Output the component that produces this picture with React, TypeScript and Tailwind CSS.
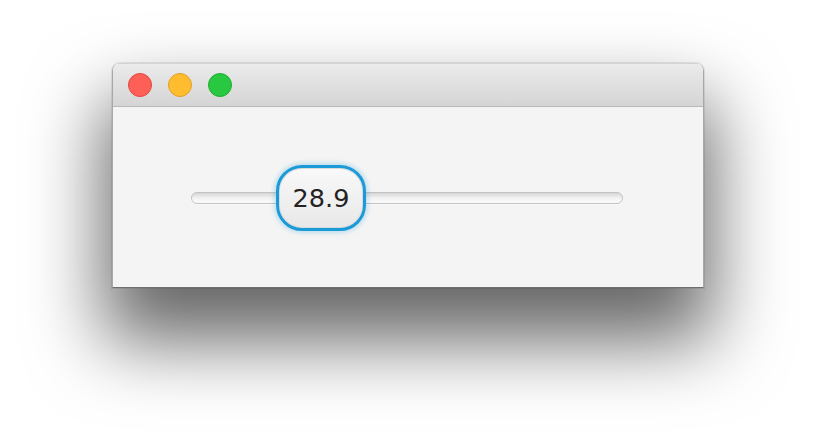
import { FC } from 'react';

const TrafficLight: FC<{ fill: string; edge: string }> = ({ fill, edge }) => (
  <span className={`block h-6 w-6 rounded-full border ${fill} ${edge}`} />
);

const Slider: FC<{ value: number }> = ({ value }) => (
  <div className="relative ml-[78px] mr-[80px] mt-[85px] h-3">
    <div className="h-3 rounded-full border border-[#c2c2c2] bg-gradient-to-b from-[#d6d6d6] via-[#f2f2f2] to-[#fbfbfb] shadow-[0_1px_0_#fafafa]" />
    {/* thumb sits on top of the track */}
    <div className="absolute left-[85px] top-[-27px] flex h-[66px] w-[90px] items-center justify-center rounded-[26px] border-[3px] border-[#1a9bd7] bg-gradient-to-b from-[#f9f9f9] to-[#e8e8e8] shadow-[0_0_4px_2px_rgba(26,155,215,0.25),inset_0_0_0_1px_#dadada]">
      <span className="pt-[1px] text-[25.5px] leading-none text-[#232323] [font-family:'DejaVu_Sans',sans-serif]">
        {value.toFixed(1)}
      </span>
    </div>
  </div>
);

export default function App() {
  return (
    <div className="h-[448px] w-[816px] overflow-hidden bg-white pl-[112px] pt-[63px]">
      <div className="flex h-[225px] w-[592px] flex-col overflow-hidden rounded-t-[8px] border-x border-b border-x-[#a8a8a8] border-b-[#6f6f6f] shadow-[0_45px_75px_8px_rgba(0,0,0,0.6),0_0_0_1px_rgba(0,0,0,0.08)]">
        <div className="flex h-[44px] shrink-0 items-center gap-4 border-b border-t border-b-[#b9b9b9] border-t-[#d4d4d4] bg-gradient-to-b from-[#ebebeb] to-[#d5d5d5] pl-[15px]">
          <TrafficLight fill="bg-[#fe5f57]" edge="border-[#e2463f]" />
          <TrafficLight fill="bg-[#febc2e]" edge="border-[#e0a028]" />
          <TrafficLight fill="bg-[#28c840]" edge="border-[#1fad31]" />
        </div>
        <div className="flex-1 bg-[#f4f4f4]">
          <Slider value={28.9} />
        </div>
      </div>
    </div>
  );
}
